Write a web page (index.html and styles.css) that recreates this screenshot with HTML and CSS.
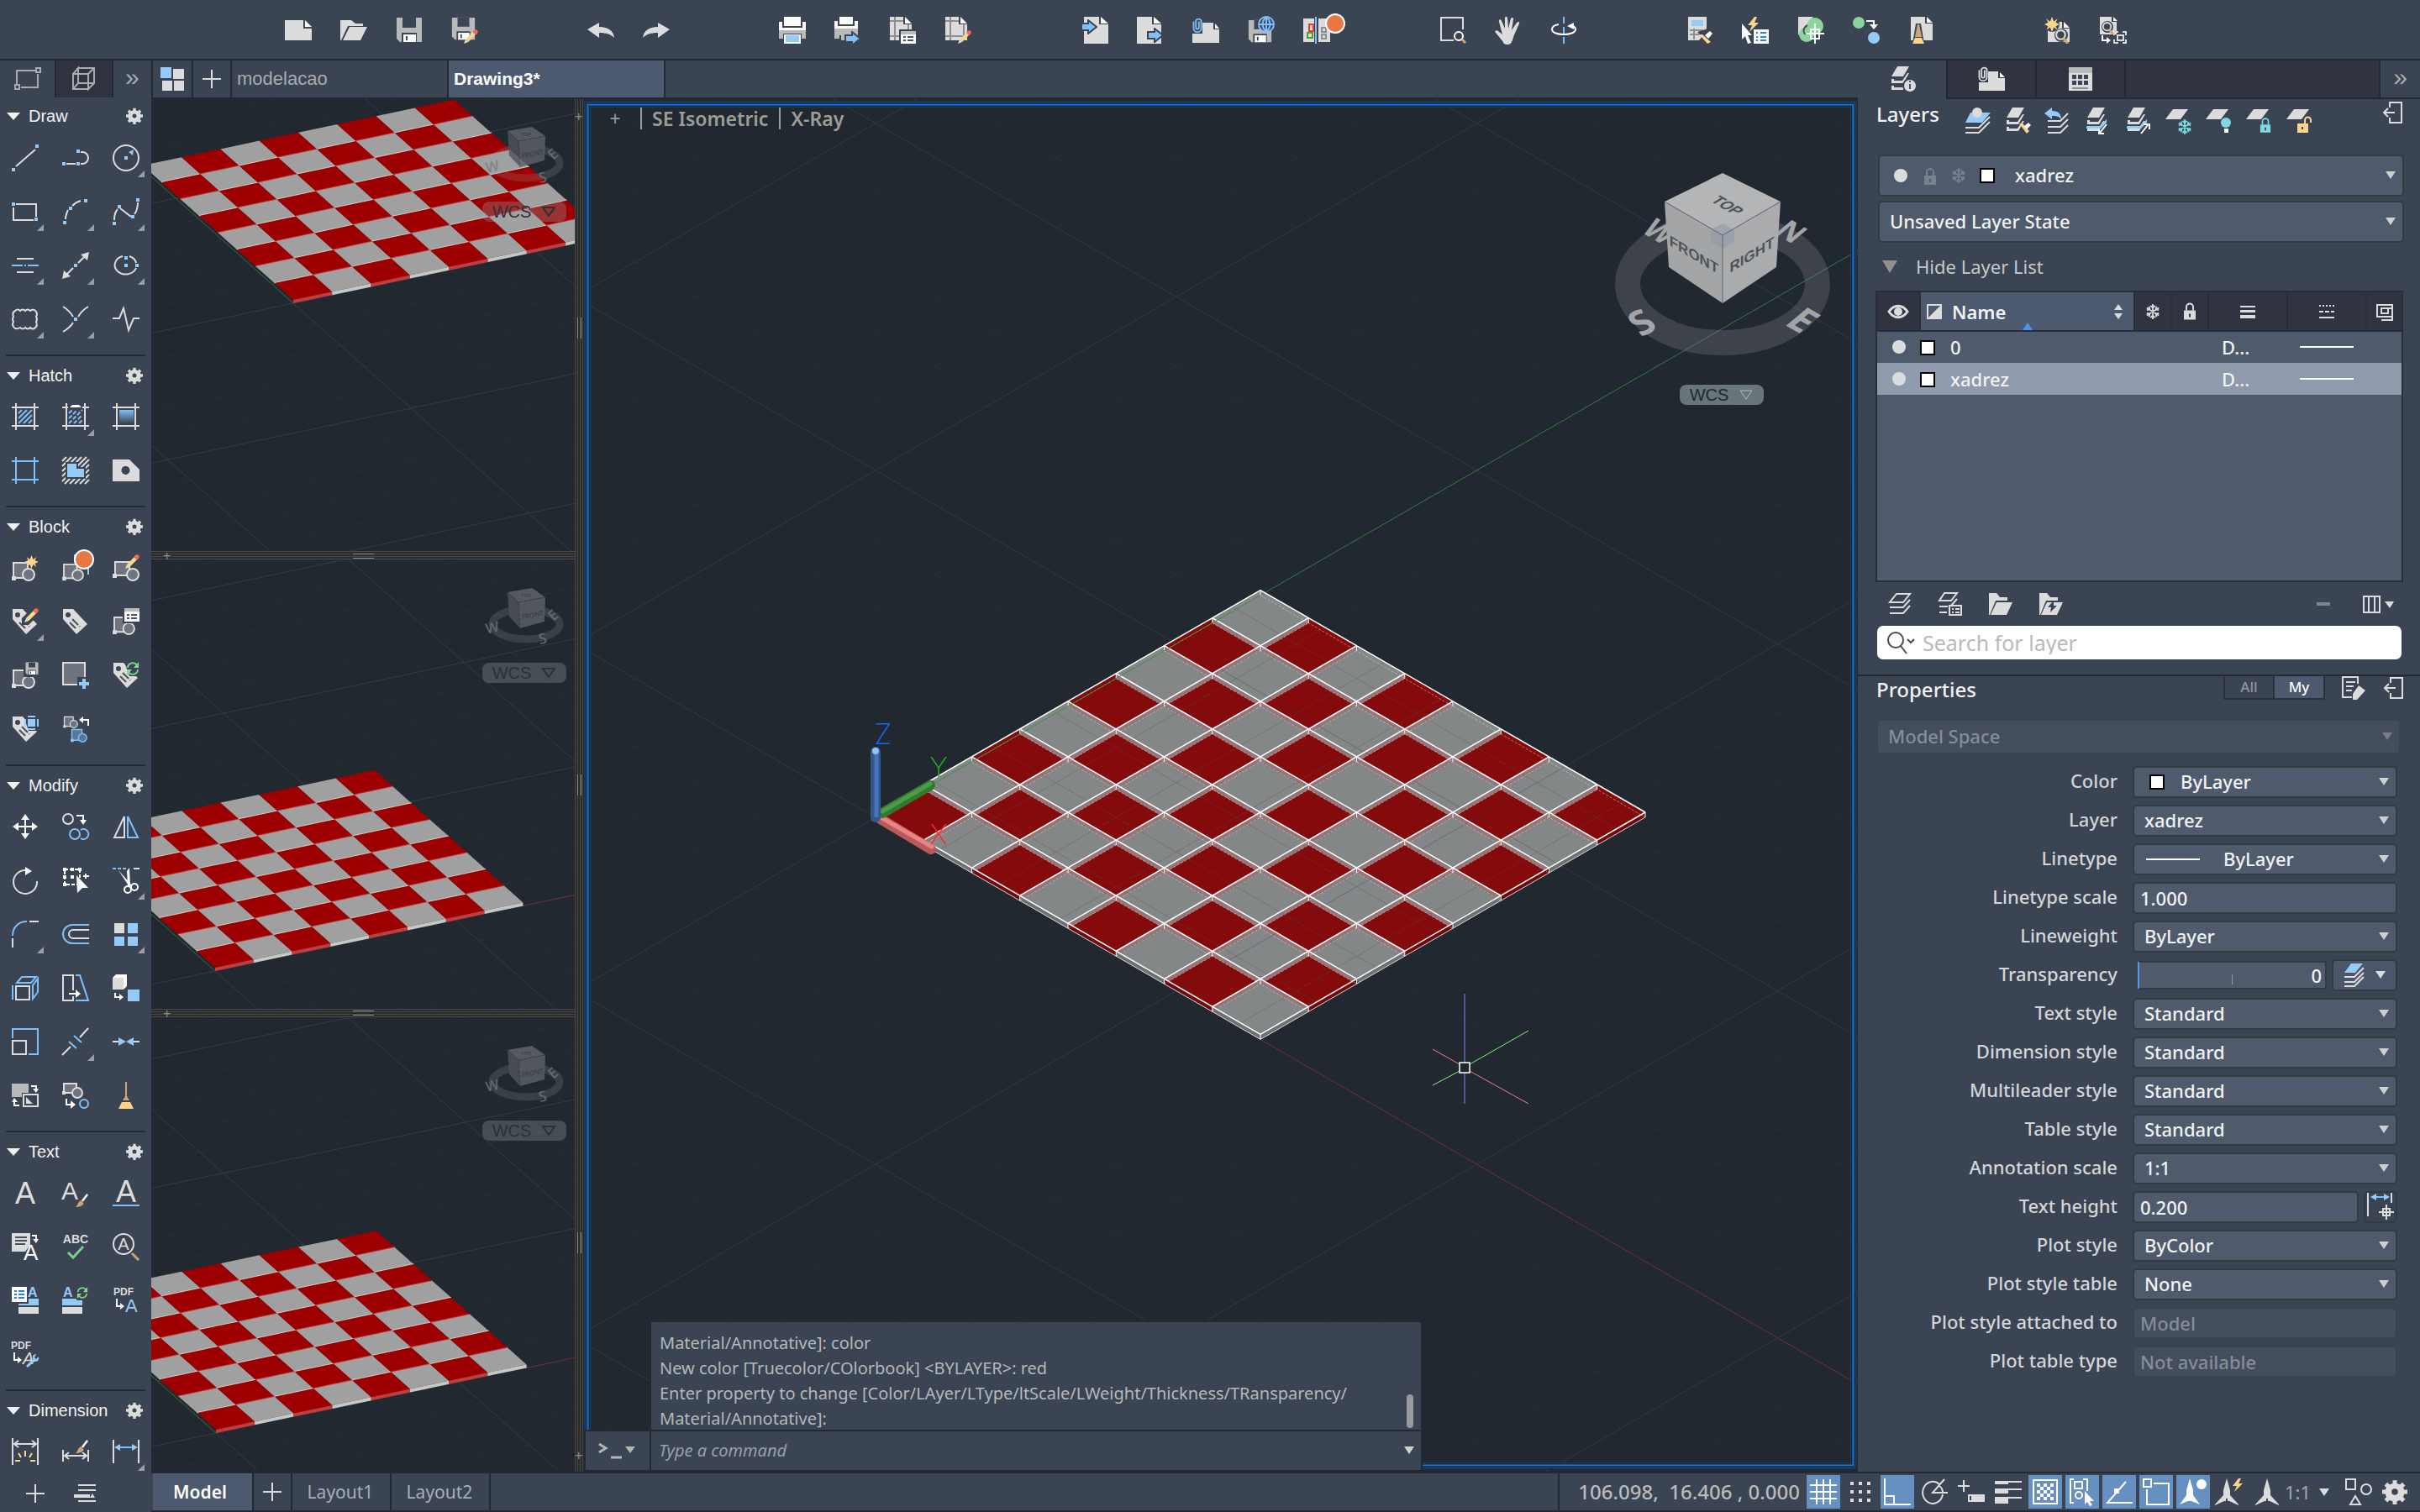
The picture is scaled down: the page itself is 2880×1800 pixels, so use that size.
FILE: index.html
```html
<!DOCTYPE html>
<html lang="en">
<head>
    <meta charset="UTF-8">
    <title>Drawing3</title>
    <link rel="stylesheet" href="styles.css">
</head>
<body>

<!-- shared icon parts -->
<svg class="sprite" aria-hidden="true">
    <symbol id="gear" viewBox="0 0 24 24">
        <path class="g" fill-rule="evenodd" d="M10 1h4v3l3 1 2-2 3 3-2 2 1 2h3v4h-3l-1 3 2 2-3 3-2-2-3 1v3h-4v-3l-3-1-2 2-3-3 2-2-1-3H0v-4h3l1-2-2-2 3-3 2 2 3-1zM12 9a3 3 0 1 0 0 6a3 3 0 1 0 0-6z"/>
    </symbol>
    <symbol id="page" viewBox="0 0 32 32"><path class="g" d="M3 0h18v9h11v23H3z"/><path class="w" d="M23 0v8h9z"/></symbol>
    <symbol id="sheet" viewBox="0 0 32 32"><path class="g" d="M0 0h16v9h10v19H0z"/><path class="w" d="M18 0v8h8z"/><path class="ms" d="M0 5h16M6 0v28M0 23h24M22 9v19"/></symbol>
    <symbol id="pencil" viewBox="0 0 16 16"><path class="r" d="M11 1l3-1 2 2-1 3-2 1-3-3z"/><path class="y" d="M10 3l3 3-8 8-3-3z"/><path class="g" d="M2 11l3 3-5 2z"/></symbol>
    <symbol id="floppy" viewBox="0 0 32 32"><path class="m" d="M1 1h30v29H5l-4-4z"/><path class="w" d="M8 1h16v10H8z"/><path class="k" d="M6 1h2v12h16V1h2M7 19h18v11H7z"/><path class="m" d="M6 1h2v10H6zM24 1h2v10h-2z"/><path class="w" d="M9 21h15v9H9z"/><path class="k" d="M12 23h2v5h-2z"/></symbol>
    <symbol id="arrow" viewBox="0 0 20 18"><path class="bd" d="M1 5h8V1l10 8-10 8v-4H1z"/></symbol>
    <symbol id="block" viewBox="0 0 28 24"><path class="fs" d="M2 2h17v18H2z"/><path class="g" d="M0 18h5v5H0z"/><circle class="fs" cx="20" cy="16" r="7"/></symbol>
    <symbol id="bblock" viewBox="0 0 28 24"><path class="bfs" d="M2 2h17v18H2z"/><path class="b" d="M0 18h5v5H0z"/><circle class="bfs" cx="20" cy="16" r="7"/></symbol>
    <symbol id="tag" viewBox="0 0 32 32"><path class="g" d="M1 1h12l17 18-13 12L1 13z"/><circle class="k" cx="7" cy="8" r="3"/><path class="ks" d="M12 13l9 9M9 17l8 8" stroke-dasharray="10 2 3"/></symbol>
    <symbol id="spark" viewBox="0 0 16 16"><path class="y" d="M8 0l2 5 4-3-2 4 4 2-4 2 2 4-4-3-2 5-2-5-4 3 2-4-4-2 4-2-2-4 4 3z"/></symbol>
    <symbol id="sync" viewBox="0 0 16 16"><path class="ns" d="M2 7a6 6 0 0 1 11-3M14 9a6 6 0 0 1-11 3"/><path class="n" d="M15 0v7H9zM1 16V9h6z"/></symbol>
    <symbol id="brush" viewBox="0 0 18 18"><path class="w" d="M9 9l7-9 2 2-7 9z"/><path class="o" d="M8 9l4 4c-2 4-6 5-11 5 3-2 3-7 7-9z"/></symbol>
    <symbol id="lens" viewBox="0 0 16 16"><circle class="gs" cx="7" cy="6" r="5"/><path class="os" d="M10 10l5 6"/></symbol>
    <symbol id="stack" viewBox="0 0 32 32"><path class="g" d="M10 0h14l-7 12H3zM3 15l3 0 0 2h10l6-9h2l-7 12H3zM3 23h3v2h10l6-9h2l-7 12H3z"/></symbol>
    <symbol id="plane" viewBox="0 0 32 32"><path class="g" d="M9 2h18L18 14H0z"/></symbol>
    <symbol id="flake" viewBox="0 0 20 20"><path d="M10 0v20M2 5l16 10M18 5L2 15M7 2l3 3 3-3M7 18l3-3 3 3M2 8l4-1-1-4M18 8l-4-1 1-4M2 12l4 1-1 4M18 12l-4 1 1 4" stroke="currentColor" stroke-width="2"/></symbol>
    <symbol id="lock" viewBox="0 0 16 20"><path d="M4 9V5a4 4 0 0 1 8 0v4" stroke="currentColor" stroke-width="2"/><path fill="currentColor" fill-rule="evenodd" d="M1 9h14v11H1zM7 13v4h2v-4z"/></symbol>
    <symbol id="clip" viewBox="0 0 12 22"><path d="M8 6v8a2 2 0 0 1-4 0V5a4 4 0 0 1 7 0v10a5 5 0 0 1-10 0V6" stroke="currentColor" stroke-width="2"/></symbol>
    <symbol id="needle" viewBox="0 0 32 32"><path class="g" d="M16 0l4 14v6l10 11v1l-11-5h-2v-3h-2v3h-2L2 32v-1l10-11v-6z"/></symbol>
    <symbol id="dock" viewBox="0 0 24 28"><path class="gs" d="M8 8V2h14v24H8v-6M14 14H2M6 9l-5 5 5 5"/></symbol>
    <symbol id="folder" viewBox="0 0 28 26"><path class="g" d="M0 0h9l4 5h9v4H8L1 26H0z"/><path class="g" d="M9 11h19l-7 15H2z"/></symbol>
    <symbol id="cube" viewBox="0 0 264 220">
        <ellipse cx="130" cy="132" rx="113" ry="70" stroke="#80858a" stroke-opacity=".3" stroke-width="30"/>
        <text class="compass" transform="translate(46 78) rotate(30) skewX(-20)">W</text>
        <text class="compass" transform="translate(202 78) rotate(30) skewX(-20)">N</text>
        <text class="compass big-letter" transform="translate(44 190) rotate(-28) skewX(12)">S</text>
        <text class="compass big-letter" transform="translate(213 186) rotate(30) skewX(-20)">E</text>
        <path d="M130 0l69 34-69 40-69-40z" fill="#b4b5b7"/>
        <path d="M61 34l69 40v81l-64-43z" fill="#a3a5a7"/>
        <path d="M199 34l-69 40v81l64-43z" fill="#a9abad"/>
        <path d="M130 60l14 8v14l-14 8-14-8V68z" fill="#8f9aa6" opacity=".6"/>
        <path d="M61 34l69 40 69-40M130 74v81" stroke="#63676b" stroke-width="1"/>
        <text class="face" transform="translate(130 42) rotate(30) skewX(-30)">TOP</text>
        <text class="face" transform="translate(96 103) skewY(31)">FRONT</text>
        <text class="face" transform="translate(165 103) skewY(-31)">RIGHT</text>
    </symbol>
    <symbol id="minicube" viewBox="0 0 100 72">
        <ellipse cx="50" cy="44" rx="40" ry="18" stroke="#9a9ea4" stroke-opacity=".25" stroke-width="9"/>
        <g fill="#777b81" font-size="17" text-anchor="middle">
            <text transform="translate(11 54) rotate(-12)">W</text>
            <text transform="translate(71 67) rotate(-12)">S</text>
            <text transform="translate(86 38) rotate(-40)">E</text>
        </g>
        <path d="M28 6l29-5 16 11-32 6z" fill="#62676d"/>
        <path d="M28 6l13 12 2 31-13-14z" fill="#50555b"/>
        <path d="M41 18l32-6-1 29-29 8z" fill="#5e6369"/>
        <path d="M28 6l13 12 32-6M41 18l2 31" stroke="#3c4147" stroke-dasharray="4 2"/>
        <text x="58" y="36" fill="#3c4147" font-size="8" text-anchor="middle" transform="rotate(-10 58 34)">FRONT</text>
        <text x="50" y="12" fill="#3c4147" font-size="6" text-anchor="middle">TOP</text>
    </symbol>
</svg>

<header class="toolbar">
    <div class="group">
        <button aria-label="New"><svg viewBox="0 0 32 32"><path class="g" d="M0 4h22v10h10v14H0z"/><path class="w" d="M24 4v8h8z"/></svg></button>
        <button aria-label="Open"><svg viewBox="0 0 32 32"><path class="g" d="M0 4h13l5 4h9v3H9L1 28H0z"/><path class="g" d="M11 12h21l-8 16H3z"/></svg></button>
        <button aria-label="Save"><svg viewBox="0 0 32 32"><use href="#floppy"/></svg></button>
        <button aria-label="Save as"><svg viewBox="0 0 32 32"><use href="#floppy" width="29" height="29"/><use href="#pencil" x="15" y="15" width="17" height="17"/></svg></button>
    </div>
    <div class="group">
        <button aria-label="Undo"><svg viewBox="0 0 32 32"><path class="g" d="M0 15L14 7v5c11 0 17 5 18 13-4-4-9-6-18-6v6z"/></svg></button>
        <button aria-label="Redo"><svg viewBox="0 0 32 32"><path class="g" d="M32 15L18 7v5C7 12 1 17 0 25c4-4 9-6 18-6v6z"/></svg></button>
    </div>
    <div class="group">
        <button aria-label="Plot"><svg viewBox="0 0 32 32"><path class="w" d="M6 0h20v11H6zM0 6h4v7h24V6h4v10H0z"/><path class="m" d="M0 16h32v10h-5v-6H5v6H0z"/><path class="w" d="M6 21h20v11H6z"/><path class="b" d="M8 22h16v8H8z"/></svg></button>
        <button aria-label="Batch plot"><svg viewBox="0 0 32 32"><path class="w" d="M6 0h16v9H6zM0 5h4v6h20V5h4v9H0z"/><path class="m" d="M0 14h28v8H6v4H0zM8 20h6v8H8z"/><use href="#arrow" x="12" y="17" width="20" height="18"/></svg></button>
        <button aria-label="Page setup"><svg viewBox="0 0 32 32"><use href="#sheet"/><path class="k" d="M11 15h21v17H11z"/><path class="w" d="M13 17h18v15H13z"/><path class="m" d="M13 17h18v4H13z"/><path class="ks" d="M16 24h3M21 24h7M16 28h3M21 28h7"/></svg></button>
        <button aria-label="Edit page setup"><svg viewBox="0 0 32 32"><use href="#sheet"/><use href="#pencil" x="15" y="16" width="16" height="16"/></svg></button>
    </div>
    <div class="group">
        <button aria-label="Import"><svg viewBox="0 0 32 32"><use href="#page"/><use href="#arrow" x="-1" y="3" width="20" height="18"/></svg></button>
        <button aria-label="Export"><svg viewBox="0 0 32 32"><use href="#page" x="-3"/><use href="#arrow" x="12" y="13" width="20" height="18"/></svg></button>
        <button aria-label="Attach"><svg viewBox="0 0 32 32"><path class="g" d="M0 20h12V7h13v8h7v16H0z"/><path class="w" d="M27 8v6h5z"/><use href="#clip" class="cb" width="12" height="20"/></svg></button>
        <button aria-label="Publish"><svg viewBox="0 0 32 32"><use href="#floppy" y="3" width="29" height="29"/><circle cx="22" cy="9" r="9" fill="#3b4453" class="bs"/><path class="bs" d="M13 9h18M22 0v18M22 0c-6 6-6 12 0 18M22 0c6 6 6 12 0 18"/></svg></button>
        <button class="badged" aria-label="Compare"><svg viewBox="0 0 32 32"><path class="g" d="M0 2h13v28H0zM18 2h14v28H18z"/><path class="bs" d="M15 0v32"/><path d="M7 9h5v8H7z" stroke="#f0392b" stroke-width="2"/><path d="M5 19h6v6H5z" stroke="#4aa02c" stroke-width="2"/><path class="ms" d="M22 13h5v5h-5zM22 21h5v5h-5z"/></svg></button>
    </div>
    <div class="group">
        <button aria-label="Zoom"><svg viewBox="0 0 32 32"><path class="gs" d="M17 28H2V1h26v14"/><circle class="ws" cx="23" cy="23" r="5"/><path class="os" d="M27 27l4 4"/></svg></button>
        <button aria-label="Pan"><svg viewBox="0 0 32 32"><path class="g" d="M10 30L1 19c-2-2 1-4 3-2l5 4L5 6c-1-3 2-4 3-1l4 9V2c0-3 3-3 3 0l1 12 3-12c1-2 4-1 3 1l-2 13 6-9c2-2 4-1 3 1l-7 16c-1 5-3 9-6 9h-2c-2 0-3-1-4-2z"/></svg></button>
        <button aria-label="Orbit"><svg viewBox="0 0 32 32"><path class="bs" d="M16 0v8M16 12v10M16 24v8"/><path class="ws" d="M10 9c-6 1-8 4-8 6 0 8 28 8 28 0 0-2-2-4-6-5"/><path class="w" d="M20 11l8-4v8z"/></svg></button>
    </div>
    <div class="group">
        <button aria-label="Match"><svg viewBox="0 0 32 32"><path class="g" d="M2 0h22v17l-9 11H2z"/><path class="b" d="M6 4h14v7H6z"/><path class="ms" d="M4 16h16M4 21h13M9 14v13"/><path class="k" d="M13 18l7-2 9-4 3 20h-6z"/><path class="y" d="M15 21l4 0 10 9-4 2z"/><path class="w" d="M22 22l6-5 3 3-5 6z"/></svg></button>
        <button aria-label="Quick select"><svg viewBox="0 0 32 32"><path class="y" d="M15 0L7 10h5L9 18l11-11h-5l3-7z"/><path class="w" d="M0 8l12 14H7l4 9-4 1-3-9-4 4zM14 15h18v17H14z"/><path d="M17 19h2M22 19h7M17 24h2M22 24h7M17 28h2M22 28h7" stroke="#2f80d8" stroke-width="2"/></svg></button>
        <button aria-label="Group"><svg viewBox="0 0 32 32"><path class="g" d="M1 0h18L1 22z"/><circle class="n" cx="21" cy="11" r="10"/><circle class="n" cx="11" cy="21" r="9"/><path class="ks" d="M12 10c-4 2-6 6-3 11"/><path class="ws" d="M21 8v24M11 20h21M16 15h10v11H16z"/></svg></button>
        <button aria-label="Purge"><svg viewBox="0 0 32 32"><circle class="n" cx="7" cy="7" r="7"/><circle class="b" cx="25" cy="25" r="7"/><path class="ws" d="M16 5h9v8"/><path class="w" d="M20 9h10l-5 6z"/></svg></button>
        <button aria-label="Clean"><svg viewBox="0 0 32 32"><path class="g" d="M3 0h17v8h9v20H3z"/><path class="w" d="M22 0v7h7z"/><path class="k" d="M9 8h6l4 24H5z"/><path class="o" d="M11 9h2l3 15H8z"/><path class="y" d="M8 25h8l3 7H5z"/></svg></button>
    </div>
    <div class="group">
        <button aria-label="New view"><svg viewBox="0 0 32 32"><path class="g" d="M4 6h17v8h9v16H4z"/><path class="w" d="M23 6v7h7z"/><circle class="k" cx="9" cy="9" r="9"/><use href="#spark" width="18" height="18"/><circle class="k" cx="20" cy="22" r="8"/><use href="#lens" x="12" y="15" width="17" height="17"/></svg></button>
        <button aria-label="Views"><svg viewBox="0 0 32 32"><path class="g" d="M0 0h14v6h6v15H0z"/><path class="w" d="M16 0v5h5z"/><circle class="k" cx="9" cy="12" r="7"/><use href="#lens" x="2" y="6" width="15" height="15"/><path class="ws" d="M3 22v6h7"/><path class="w" d="M8 24l5 4-5 4z"/><path class="gs" d="M17 22v-4h5M27 18h4v4M31 27v4h-4M22 31h-5v-4M21 22h7v6h-7z"/></svg></button>
    </div>
</header>

<div class="main">
    <aside class="tools">
        <div class="tool-tabs">
            <button class="on" aria-label="Drafting"><svg viewBox="0 0 32 28"><path class="ds" d="M3 20V4h22M28 8v16H8"/><path class="ds" d="M1 21h5v5H1zM26 1h5v5h-5z"/></svg></button>
            <button aria-label="Modeling"><svg viewBox="0 0 32 28"><path class="ds" d="M3 8h18v18H3zM9 1h19v18l-7 7V8l7-7M3 8l6-7v18l-6 7M9 19h19"/></svg></button>
            <button class="more" aria-label="More">»</button>
        </div>
        <div class="sets">
            <section>
                <h2>Draw<svg viewBox="0 0 24 24"><use href="#gear"/></svg></h2>
                <div class="grid">
                    <button aria-label="Line"><svg viewBox="0 0 32 32"><path class="gs" d="M5 26L28 6"/><path class="b" d="M0 28h4v4H0zM28 0h4v4h-4z"/></svg></button>
                    <button aria-label="Polyline"><svg viewBox="0 0 32 32"><path class="gs" d="M5 23h11M22 9h2a7 7 0 0 1 0 14h-2"/><path class="b" d="M0 21h4v4H0zM17 21h4v4h-4zM17 6h4v4h-4z"/></svg></button>
                    <button class="fly" aria-label="Circle"><svg viewBox="0 0 32 32"><circle class="gs" cx="16" cy="16" r="15"/><path class="b" d="M14 14h4v4h-4zM25 6l-1 7-5-4z"/></svg></button>
                    <button class="fly" aria-label="Rectangle"><svg viewBox="0 0 32 32"><path class="gs" d="M5 7h24v15M26 26H2V11"/><path class="b" d="M0 5h4v4H0zM27 23h4v4h-4z"/></svg></button>
                    <button class="fly" aria-label="Arc"><svg viewBox="0 0 32 32"><path class="gs" d="M4 25c0-5 1-7 3-11M12 9c3-3 6-5 10-6"/><path class="b" d="M1 27h4v4H1zM8 10h4v4H8zM26 1h4v4h-4z"/></svg></button>
                    <button class="fly" aria-label="Spline"><svg viewBox="0 0 32 32"><path class="gs" d="M2 26c0-6 1-10 4-13M9 12l13 10M26 19c3-4 4-8 4-14"/><path class="b" d="M0 28h4v4H0zM6 8h4v4H6zM22 20h4v4h-4zM28 0h4v4h-4z"/></svg></button>
                    <button class="fly" aria-label="Construction line"><svg viewBox="0 0 32 32"><path class="gs" d="M6 8h20M6 24h20"/><path class="bs" d="M0 16h32" stroke-dasharray="13 2 2 2"/></svg></button>
                    <button class="fly" aria-label="Ray"><svg viewBox="0 0 32 32"><path class="gs" d="M5 27l8-8M19 13l8-8"/><path class="g" d="M0 32l2-10 8 7zM32 0l-2 10-8-7z"/><path class="b" d="M14 14h4v4h-4z"/></svg></button>
                    <button class="fly" aria-label="Ellipse"><svg viewBox="0 0 32 32"><path class="gs" d="M20 5a13 11 0 0 1 8 8M28 19a13 11 0 1 1-16-14"/><path class="b" d="M14 14h4v4h-4zM14 5h4v4h-4zM27 14h4v4h-4z"/></svg></button>
                    <button class="fly" aria-label="Revision cloud"><svg viewBox="0 0 32 32"><path class="gs" d="M4 6q3-3 6 0q3-3 6 0q3-3 6 0q4-3 7 1q2 3 0 6q2 3 0 6q2 5-1 7q-3 3-6 0q-3 3-6 0q-3 3-6 0q-5 3-8-1q-2-3 0-6q-2-3 0-6q-2-5 2-7z"/></svg></button>
                    <button class="fly" aria-label="Points"><svg viewBox="0 0 32 32"><path class="gs" d="M1 1c5 3 9 7 12 12M31 1c-5 3-9 7-12 12M1 31c5-3 9-6 12-11"/><path class="b" d="M14 14h4v4h-4z"/></svg></button>
                    <button aria-label="Break line"><svg viewBox="0 0 32 32"><path class="gs" d="M0 15h8l5-12 6 26 6-14h7"/></svg></button>
                </div>
            </section>
            <section>
                <h2>Hatch<svg viewBox="0 0 24 24"><use href="#gear"/></svg></h2>
                <div class="grid">
                    <button aria-label="Hatch"><svg viewBox="0 0 32 32"><path class="gs" d="M0 5h32M0 27h32M5 0v32M27 0v32"/><path class="bs" d="M8 12l4-4M8 18L18 8M8 24L24 8M14 24l10-10M20 24l4-4"/></svg></button>
                    <button class="fly" aria-label="Hatch edit"><svg viewBox="0 0 32 32"><path class="gs" d="M0 5h7M24 5h8M0 27h32M5 0v32M27 0v32"/><path class="w" d="M9 5l3-3h8l3 3z"/><path class="bs" d="M8 12l4-4M8 18L18 8M8 24L24 8M14 24l10-10M20 24l4-4" stroke-dasharray="5 2"/></svg></button>
                    <button aria-label="Gradient"><svg viewBox="0 0 32 32"><defs><linearGradient id="fade" x2="0" y2="1"><stop stop-color="#7fc0fb"/><stop offset="1" stop-color="#3b4453"/></linearGradient></defs><path d="M8 8h17v16H8z" fill="url(#fade)"/><path class="gs" d="M0 5h32M0 27h32M5 0v32M27 0v32"/></svg></button>
                    <button aria-label="Boundary"><svg viewBox="0 0 32 32"><path class="bs" d="M0 5h32M0 27h32M5 0v32M27 0v32"/></svg></button>
                    <button aria-label="Region"><svg viewBox="0 0 32 32"><path class="gs" d="M0 5l5-5M0 11L11 0M0 17L17 0M0 23L23 0M0 29L29 0M3 32L32 3M9 32L32 9M15 32l17-17M21 32l11-11M27 32l5-5"/><path class="k" d="M4 6h15v6h9v14H4z"/><path class="b" d="M6 8h11v6h9v10H6z"/></svg></button>
                    <button aria-label="Wipeout"><svg viewBox="0 0 32 32"><path class="g" fill-rule="evenodd" d="M0 3h20l12 12v14H0zM15 11a5 5 0 1 0 1 0z"/></svg></button>
                </div>
            </section>
            <section>
                <h2>Block<svg viewBox="0 0 24 24"><use href="#gear"/></svg></h2>
                <div class="grid">
                    <button aria-label="Create block"><svg viewBox="0 0 32 32"><use href="#block" y="8" width="28" height="24"/><use href="#spark" x="15" y="1" width="17" height="16"/></svg></button>
                    <button class="badged" aria-label="Insert block"><svg viewBox="0 0 32 32"><path class="b" d="M14 0h18v24H14z"/><path class="k" d="M0 10h24v5h6v9H0z"/><use href="#block" y="10" width="26" height="22"/></svg></button>
                    <button aria-label="Edit block"><svg viewBox="0 0 32 32"><path class="fs" d="M3 9h17v16H3z"/><path class="g" d="M0 23h5v5H0z"/><circle class="fs" cx="24" cy="24" r="7"/><use href="#pencil" x="15" width="17" height="17"/></svg></button>
                    <button class="fly" aria-label="Edit attributes"><svg viewBox="0 0 32 32"><use href="#tag"/><path class="k" d="M12 12L24 0h8v8L20 20h-8z"/><use href="#pencil" x="15" width="17" height="17"/></svg></button>
                    <button aria-label="Attributes"><svg viewBox="0 0 32 32"><use href="#tag"/></svg></button>
                    <button aria-label="Block attributes"><svg viewBox="0 0 32 32"><use href="#block" y="9" width="27" height="23"/><path class="k" d="M12 0h20v18H12z"/><path class="w" d="M14 0h18v16H14z"/><path class="m" d="M14 0h18v4H14z"/><path class="ks" d="M17 8h3M22 8h7M17 12h3M22 12h7"/></svg></button>
                    <button aria-label="Write block"><svg viewBox="0 0 32 32"><use href="#block" y="8" width="28" height="24"/><path class="k" d="M14 0h18v18H14z"/><use href="#floppy" x="16" width="16" height="16"/></svg></button>
                    <button aria-label="Base point"><svg viewBox="0 0 32 32"><path class="fs" d="M1 1h26v26H1z"/><path class="k" d="M18 18h14v14H18z"/><path class="b" d="M24 20h4v4h4v4h-4v4h-4v-4h-4v-4h4z"/></svg></button>
                    <button aria-label="Sync attributes"><svg viewBox="0 0 32 32"><use href="#tag"/><path class="k" d="M14 0h18v17H20z"/><use href="#sync" x="16" width="16" height="16"/></svg></button>
                    <button aria-label="Extract attributes"><svg viewBox="0 0 32 32"><use href="#tag"/><path class="k" d="M14 0h18v18H20z"/><path class="b" d="M19 4h9v9h-9zM19 0h9v2h-9zM19 15h9v2h-9zM15 4h2v9h-2zM30 4h2v9h-2z"/></svg></button>
                    <button aria-label="Replace block"><svg viewBox="0 0 32 32"><use href="#block" width="20" height="15"/><use href="#bblock" x="8" y="15" width="24" height="17"/><path class="ws" d="M24 5h7v7"/><path class="w" d="M20 5l5-4v8z"/></svg></button>
                </div>
            </section>
            <section>
                <h2>Modify<svg viewBox="0 0 24 24"><use href="#gear"/></svg></h2>
                <div class="grid">
                    <button aria-label="Move"><svg viewBox="0 0 32 32"><path class="w" d="M16 1l5 7h-4v7h7v-4l7 5-7 5v-4h-7v7h4l-5 7-5-7h4v-7H8v4l-7-5 7-5v4h7V8h-4z"/></svg></button>
                    <button aria-label="Copy"><svg viewBox="0 0 32 32"><circle class="gs" cx="7" cy="7" r="6"/><circle class="bs" cx="15" cy="25" r="6"/><path class="bs" d="M22 20a6 6 0 1 1 0 10"/><path class="ws" d="M17 3h8v7"/><path class="w" d="M21 8h8l-4 6z"/></svg></button>
                    <button aria-label="Mirror"><svg viewBox="0 0 32 32"><path class="gs" d="M14 4v25H2z"/><path class="bs" d="M18 4v25h12z"/></svg></button>
                    <button aria-label="Rotate"><svg viewBox="0 0 32 32"><path class="gs" d="M17 4A14 14 0 1 0 30 17"/><path class="w" d="M16 0l8 5-8 5z"/></svg></button>
                    <button aria-label="Stretch"><svg viewBox="0 0 32 32"><path class="ws" d="M3 3h18v18H3z" stroke-dasharray="4 2"/><path class="w" d="M1 1h4v4H1zM10 1h4v4h-4zM19 1h4v4h-4zM1 10h4v4H1zM1 19h4v4H1zM10 10h4v4h-4zM25 10h7v2h-7zM27 8h2v6h-2z"/><path class="w" d="M17 10l14 15h-7l-6 6z"/></svg></button>
                    <button class="fly" aria-label="Trim"><svg viewBox="0 0 32 32"><path class="bs" d="M0 2h17" stroke-dasharray="4 2"/><path class="gs" d="M25 2h7"/><path class="w" d="M7 4l16 18-3 2zM20 1l1 20-3 1-1-17z"/><circle class="ws" cx="18" cy="27" r="4"/><circle class="ws" cx="26" cy="24" r="4"/></svg></button>
                    <button class="fly" aria-label="Fillet"><svg viewBox="0 0 32 32"><path class="bs" d="M1 18C1 8 8 1 18 1"/><path class="gs" d="M21 1h11M1 21v11"/></svg></button>
                    <button aria-label="Offset"><svg viewBox="0 0 32 32"><path class="bs" d="M32 5H12a11 11 0 0 0 0 22h20"/><path class="gs" d="M32 11H13a5 5 0 0 0 0 10h19"/></svg></button>
                    <button class="fly" aria-label="Array"><svg viewBox="0 0 32 32"><path class="g" d="M2 3h12v12H2z"/><path class="b" d="M18 3h12v12H18zM2 19h12v11H2zM18 19h12v11H18z"/></svg></button>
                    <button aria-label="Offset faces"><svg viewBox="0 0 32 32"><path class="gs" d="M5 14h16v16H5z"/><path class="bs" d="M6 10l6-7h17l-6 7zM25 13l6-8v16l-6 8zM1 13v17"/></svg></button>
                    <button aria-label="Taper"><svg viewBox="0 0 32 32"><path class="gs" d="M13 19V1H1v30h12v-5"/><path class="bs" d="M16 1h5l10 30H16"/><path class="ws" d="M8 23h10"/><path class="w" d="M16 18l6 5-6 5z"/></svg></button>
                    <button aria-label="Flatten"><svg viewBox="0 0 32 32"><path class="w" d="M0 4l4-4h13v14l-4 4z"/><path class="g" d="M0 4h13v14H0z"/><path class="b" d="M18 18h14v14H18z"/><path class="ws" d="M3 22v5h5"/><path class="w" d="M8 23l5 4-5 4z"/></svg></button>
                    <button aria-label="Scale"><svg viewBox="0 0 32 32"><path class="bs" d="M1 12V1h30v30H20"/><path class="gs" d="M1 15h16v16H1z"/></svg></button>
                    <button class="fly" aria-label="Break"><svg viewBox="0 0 32 32"><path class="gs" d="M0 32l10-10M21 11L31 0"/><path class="bs" d="M8 16l9 8M14 9l9 8"/></svg></button>
                    <button aria-label="Join"><svg viewBox="0 0 32 32"><path class="gs" d="M0 16h8M24 16h8"/><path class="b" d="M7 11l9 5-9 5zM25 11l-9 5 9 5z"/></svg></button>
                    <button aria-label="Draw order"><svg viewBox="0 0 32 32"><path class="m" d="M0 2h20v11h-8v5H0z"/><path class="gs" d="M14 15h17v14H14z"/><path class="g" d="M17 18l8 8h-8z"/><path class="ws" d="M23 5h6v5M9 28H3v-5"/><path class="w" d="M25 8h7l-3 5zM0 24h7l-4-5z"/></svg></button>
                    <button aria-label="Change space"><svg viewBox="0 0 32 32"><path class="fs" d="M2 2h15v11H2z"/><circle class="fs" cx="18" cy="13" r="6"/><path class="g" d="M0 11h4v4H0z"/><circle class="bs" cx="26" cy="26" r="5"/><path class="ws" d="M5 20v7h6"/><path class="w" d="M10 22l6 5-6 5z"/></svg></button>
                    <button aria-label="Purge"><svg viewBox="0 0 32 32"><path class="o" d="M15 0h2v17l3 5h-8l3-5z"/><path class="y" d="M11 24h10l4 8H7z"/></svg></button>
                </div>
            </section>
            <section>
                <h2>Text<svg viewBox="0 0 24 24"><use href="#gear"/></svg></h2>
                <div class="grid">
                    <button aria-label="Text"><svg viewBox="0 0 32 32"><text class="g mid" x="16" y="29" font-size="36">A</text></svg></button>
                    <button aria-label="Text style"><svg viewBox="0 0 32 32"><text class="g" x="-1" y="24" font-size="30">A</text><use href="#brush" x="14" y="17" width="18" height="16"/></svg></button>
                    <button aria-label="Underline"><svg viewBox="0 0 32 32"><text class="g mid" x="16" y="27" font-size="36">A</text><path class="bs" d="M0 31h32"/></svg></button>
                    <button aria-label="Convert text"><svg viewBox="0 0 32 32"><path class="g" d="M0 0h22v14l-6 8H0z"/><path class="ks" d="M4 5h14M4 9h14M4 13h12"/><text class="w" x="14" y="32" font-size="26">A</text><path class="ws" d="M24 3h5v6"/><path class="w" d="M25 7h7l-3 5z"/></svg></button>
                    <button aria-label="Spelling"><svg viewBox="0 0 32 32"><text class="g mid" x="16" y="12" font-size="14" font-weight="bold">ABC</text><path d="M7 23l6 6L25 16" stroke="#79d08a" stroke-width="3"/></svg></button>
                    <button aria-label="Find text"><svg viewBox="0 0 32 32"><circle class="gs" cx="13" cy="13" r="12"/><text class="g mid" x="13" y="20" font-size="20">A</text><path class="os" d="M23 24l8 8"/></svg></button>
                    <button aria-label="Text list"><svg viewBox="0 0 32 32"><path class="w" d="M0 0h18v18H0z"/><path d="M3 5h3M8 5h7M3 9h3M8 9h7M3 13h3M8 13h7" stroke="#2f80d8" stroke-width="2"/><text class="b" x="19" y="12" font-size="16" font-weight="bold">A</text><path class="b" d="M20 14h12v8H8v-2h12z"/><path class="g" d="M8 24h24v8H8z"/></svg></button>
                    <button aria-label="Update fields"><svg viewBox="0 0 32 32"><text class="b" x="1" y="12" font-size="16" font-weight="bold">A</text><use href="#sync" x="16" width="16" height="14"/><path class="b" d="M0 14h16l2 2h6v6H0z"/><path class="g" d="M0 24h24v8H0z"/></svg></button>
                    <button aria-label="PDF text"><svg viewBox="0 0 32 32"><text class="g" x="1" y="10" font-size="12" font-weight="bold">PDF</text><path class="ws" d="M5 14v9h5"/><path class="w" d="M9 19l5 4-5 4z"/><text class="b" x="15" y="30" font-size="22">A</text></svg></button>
                    <button aria-label="PDF text settings"><svg viewBox="0 0 32 32"><text class="g" x="-1" y="10" font-size="12" font-weight="bold">PDF</text><path class="ws" d="M3 14v9h5"/><path class="w" d="M7 19l5 4-5 4z"/><text class="g" x="13" y="28" font-size="20" font-style="italic">A</text><path class="b" d="M17 30l8-8c-1-4 1-6 4-6l-2 4 2 2 3-3c1 4-1 6-5 6l-8 7z"/></svg></button>
                </div>
            </section>
            <section>
                <h2>Dimension<svg viewBox="0 0 24 24"><use href="#gear"/></svg></h2>
                <div class="grid">
                    <button aria-label="Dimension"><svg viewBox="0 0 32 32"><path class="gs" d="M1 0v32M31 0v32M4 7h24M8 3L3 7l5 4M24 3l5 4-5 4"/><path class="ys" d="M16 15v7M8 18l3 5M24 18l-3 5M4 27h6M28 27h-6"/></svg></button>
                    <button aria-label="Dimension style"><svg viewBox="0 0 32 32"><path class="gs" d="M1 14v14M31 14v14M4 21h24M8 17l-5 4 5 4M24 17l5 4-5 4"/><use href="#brush" x="14" y="2" width="18" height="16"/></svg></button>
                    <button class="fly" aria-label="Linear"><svg viewBox="0 0 32 32"><path class="gs" d="M1 2v28M31 2v28"/><path class="bs" d="M4 11h24"/><path class="b" d="M9 7v8l-7-4zM23 7v8l7-4z"/></svg></button>
                </div>
            </section>
        </div>
        <div class="tool-foot">
            <button aria-label="Add"><svg viewBox="0 0 22 22"><path class="gs" d="M11 0v22M0 11h22"/></svg></button>
            <button aria-label="Customize"><svg viewBox="0 0 26 22"><path class="gs" d="M5 1h21M5 7h21M5 20h21"/><path class="g" d="M0 12h19v4H0zM22 11l3 5h-6z"/></svg></button>
        </div>
    </aside>

    <div class="work">
        <div class="desk">
            <div class="center">
                <nav class="doc-tabs">
                    <button class="square" aria-label="All tabs"><svg viewBox="0 0 28 28"><path class="b" d="M0 0h13v13H0z"/><path class="g" d="M15 2h13v12H15zM2 16h12v12H2zM16 16h12v12H16z"/></svg></button>
                    <button class="square" aria-label="New tab"><svg viewBox="0 0 22 22" class="plus"><path class="gs" d="M11 0v22M0 11h22"/></svg></button>
                    <a class="doc" href="#modelacao">modelacao</a>
                    <a class="doc on" href="#drawing3">Drawing3*</a>
                </nav>
                <div class="views">
                    <div class="side-views">
                        <div class="view"><svg class="canvas" id="view1"></svg><svg class="minicube" viewBox="0 0 100 72"><use href="#minicube"/></svg><button class="wcs">WCS <svg viewBox="0 0 18 12"><path d="M2 1h14l-7 10z"/></svg></button></div>
                        <div class="split"><i></i></div>
                        <div class="view"><svg class="canvas" id="view2"></svg><svg class="minicube" viewBox="0 0 100 72"><use href="#minicube"/></svg><button class="wcs">WCS <svg viewBox="0 0 18 12"><path d="M2 1h14l-7 10z"/></svg></button></div>
                        <div class="split"><i></i></div>
                        <div class="view"><svg class="canvas" id="view3"></svg><svg class="minicube" viewBox="0 0 100 72"><use href="#minicube"/></svg><button class="wcs">WCS <svg viewBox="0 0 18 12"><path d="M2 1h14l-7 10z"/></svg></button></div>
                    </div>
                    <div class="split upright"><i></i><i></i><i></i></div>
                    <div class="view current">
                        <svg class="canvas" id="view4"></svg>
                        <div class="view-label"><button class="first">+</button><button>SE Isometric</button><button>X-Ray</button></div>
                        <svg class="bigcube" viewBox="0 0 264 220"><use href="#cube"/></svg>
                        <button class="wcs">WCS <svg viewBox="0 0 18 12"><path d="M2 1h14l-7 10z"/></svg></button>
                        <div class="command">
                            <div class="history">
                                <p>Material/Annotative]: color<br>New color [Truecolor/COlorbook] &lt;BYLAYER&gt;: red<br>Enter property to change [Color/LAyer/LType/ltScale/LWeight/Thickness/TRansparency/<br>Material/Annotative]:</p>
                            </div>
                            <button class="prompt" aria-label="Recent commands"><svg viewBox="0 0 46 20"><path d="M1 2l8 5-8 5M15 18h13" stroke="#b4b4b4" stroke-width="3"/><path d="M32 5h12l-6 8z" fill="#b4b4b4"/></svg></button>
                            <div class="entry"><input type="text" placeholder="Type a command" aria-label="Command"></div>
                        </div>
                    </div>
                </div>
            </div>

            <aside class="palette">
                <div class="palette-tabs">
                    <button class="on" aria-label="Layers and properties"><svg viewBox="0 0 32 32"><use href="#stack"/><circle class="k" cx="25" cy="23" r="9"/><circle class="g" cx="25" cy="23" r="7"/><path class="ks" d="M25 21v6M25 17v2"/></svg></button>
                    <button aria-label="References"><svg viewBox="0 0 32 32"><path class="g" d="M1 20h11V7h12v8h8v15H1z"/><path class="w" d="M26 8v6h6z"/><use href="#clip" class="cg" width="12" height="20"/></svg></button>
                    <button aria-label="Content"><svg viewBox="0 0 32 32"><path class="g" d="M2 2h28v28H2z"/><path class="m" d="M2 2h28v7H2z"/><path class="k" d="M6 11h5v5H6zM13 11h5v5h-5zM20 11h5v5h-5zM6 18h5v5H6zM13 18h5v5h-5zM20 18h5v5h-5z"/><path class="ms" d="M6 27h19"/></svg></button>
                    <button class="more" aria-label="More">»</button>
                </div>

                <section class="layers">
                    <div class="title-row">
                        <h2>Layers</h2>
                        <div class="layer-tools">
                            <button aria-label="Match"><svg viewBox="0 0 32 32"><path class="b" d="M8 6h24L22 18H2z"/><circle class="g" cx="16" cy="6" r="6"/><path class="gs" d="M2 24h16L31 11M2 30h16l13-13"/></svg></button>
                            <button aria-label="Previous"><svg viewBox="0 0 32 32"><use href="#stack"/><path class="y" d="M18 19l4 0 8 9-3 3z"/><path class="w" d="M24 22l5-4 3 3-5 5z"/></svg></button>
                            <button aria-label="Restore"><svg viewBox="0 0 32 32"><path class="gs" d="M4 16h15l9-9M4 23h15l9-9M4 30h15l9-9"/><path class="b" d="M0 7l9-7v4c8 0 11 4 11 10-3-4-6-4-11-4v4z"/></svg></button>
                            <button aria-label="Isolate"><svg viewBox="0 0 32 32"><use href="#stack"/><path class="b" d="M2 22h16l8-8v4l-7 7H2z"/><path class="ws" d="M26 20l-8 10M17 25v6h6"/></svg></button>
                            <button aria-label="Unisolate"><svg viewBox="0 0 32 32"><use href="#stack"/><path class="b" d="M2 22h16l8-8v4l-7 7H2z"/><path class="ws" d="M19 31l8-10M22 20h7v6"/></svg></button>
                            <button aria-label="Freeze"><svg viewBox="0 0 32 32"><use href="#plane"/><use href="#flake" class="cc" x="14" y="14" width="18" height="18"/></svg></button>
                            <button aria-label="Off"><svg viewBox="0 0 32 32"><use href="#plane"/><circle cx="24" cy="18" r="6" fill="#7fd8e0"/><path class="w" d="M22 25h5v5h-5z"/></svg></button>
                            <button aria-label="Lock"><svg viewBox="0 0 32 32"><use href="#plane"/><use href="#lock" class="cc" x="16" y="12" width="14" height="18"/></svg></button>
                            <button aria-label="Unlock"><svg viewBox="0 0 32 32"><use href="#plane"/><path class="y" fill-rule="evenodd" d="M13 19h13v11H13zM18 23v3h2v-3z"/><path class="ys" d="M22 19v-4a3 3 0 0 1 7 0v3"/></svg></button>
                        </div>
                        <button class="dock" aria-label="Undock"><svg viewBox="0 0 24 28"><use href="#dock"/></svg></button>
                    </div>

                    <div class="combo big marks">
                        <span class="lead"><svg viewBox="0 0 120 36"><circle class="g" cx="18" cy="18" r="8"/><use href="#lock" class="cf" x="45" y="9" width="16" height="20"/><use href="#flake" class="cf" x="78" y="9" width="18" height="18"/></svg><b class="swatch"></b></span>
                        <select aria-label="Current layer"><option>xadrez</option><option>0</option></select>
                    </div>
                    <div class="combo big"><select aria-label="Layer state"><option>Unsaved Layer State</option></select></div>
                    <button class="fold">Hide Layer List</button>

                    <div class="layer-list">
                        <table>
                            <colgroup><col class="c-eye"><col><col class="c-flag"><col class="c-flag"><col class="c-line"><col class="c-line"><col class="c-last"></colgroup>
                            <thead>
                                <tr>
                                    <th><svg class="ic" viewBox="0 0 24 24"><path d="M1 12c6-9 16-9 22 0-6 9-16 9-22 0z" stroke="#dcdcdc" stroke-width="3"/><circle class="g" cx="12" cy="12" r="5"/></svg></th>
                                    <th class="name"><div><svg class="ic" viewBox="0 0 24 24"><path class="gs" d="M4 4h16v16H4z"/><path class="g" d="M4 20L20 4v16z"/></svg><span>Name</span><svg class="ic" viewBox="0 0 24 24"><path class="g" d="M12 3l5 7H7zM12 21l5-7H7z"/></svg></div></th>
                                    <th><svg class="ic cg" viewBox="0 0 24 24"><use href="#flake" x="3" y="3" width="18" height="18"/></svg></th>
                                    <th><svg class="ic cg" viewBox="0 0 24 24"><use href="#lock" x="4" y="1" width="16" height="21"/></svg></th>
                                    <th><svg class="ic" viewBox="0 0 24 24"><path class="g" d="M3 5h18v2H3zM3 10h18v3H3zM3 16h18v4H3z"/></svg></th>
                                    <th><svg class="ic" viewBox="0 0 24 24"><path class="gs" d="M3 5h18" stroke-dasharray="2 2"/><path class="gs" d="M3 12h18" stroke-dasharray="5 2"/><path class="gs" d="M3 19h18"/></svg></th>
                                    <th><svg class="ic" viewBox="0 0 24 24"><path class="gs" d="M3 4h18v14H3zM8 8h13v14H8M8 8h8v6H8z"/></svg></th>
                                </tr>
                            </thead>
                            <tbody>
                                <tr><td><i class="dot"></i></td><td><b class="swatch"></b>0</td><td></td><td></td><td>D...</td><td><i class="rule"></i></td><td></td></tr>
                                <tr class="picked"><td><i class="dot"></i></td><td><b class="swatch"></b>xadrez</td><td></td><td></td><td>D...</td><td><i class="rule"></i></td><td></td></tr>
                            </tbody>
                        </table>
                    </div>

                    <div class="list-tools">
                        <button aria-label="New layer"><svg viewBox="0 0 28 28"><path class="gs" d="M10 2h16l-8 10H2zM2 18h16l8-9M2 25h16l8-9"/></svg></button>
                        <button aria-label="Layer states"><svg viewBox="0 0 28 28"><path class="gs" d="M7 1h15l-7 9H1zM1 17h10M1 24h9M15 16l7-8"/><path class="gs" d="M13 16h14v11H13z"/><path class="gs" d="M16 20h2M20 20h5M16 24h2M20 24h5"/></svg></button>
                        <button aria-label="New group"><svg viewBox="0 0 28 28"><use href="#folder" y="1" width="28" height="26"/></svg></button>
                        <button aria-label="Dynamic group"><svg viewBox="0 0 28 28"><use href="#folder" y="1" width="28" height="26"/><path class="k" d="M17 10l-7 8h4l-1 6 8-8h-4z"/></svg></button>
                        <span class="push"></span>
                        <button aria-label="Delete"><svg viewBox="0 0 28 28"><path d="M6 12h16v4H6z" fill="#7d8490"/></svg></button>
                        <button class="cols" aria-label="Columns"><svg viewBox="0 0 38 28"><path class="gs" d="M2 5h19v19H2zM8 5v19M15 5v19"/><path class="g" d="M27 11h11l-5 8z"/></svg></button>
                    </div>
                    <div class="search">
                        <svg viewBox="0 0 34 30"><circle cx="11" cy="12" r="9" stroke="#4a4a4a" stroke-width="2"/><path d="M17 19l7 9M25 11l4 4 4-4" stroke="#4a4a4a" stroke-width="2"/></svg>
                        <input type="text" placeholder="Search for layer" aria-label="Search for layer">
                    </div>
                </section>

                <section class="props">
                    <div class="title-row">
                        <h2>Properties</h2>
                        <div class="switch"><button>All</button><button class="on">My</button></div>
                        <button class="note" aria-label="Customize"><svg viewBox="0 0 28 28"><path class="gs" d="M12 25H1V1h18v8M5 7h11M5 12h9M5 17h7"/><path class="g" d="M20 11l8 6-10 11h-5v-7z"/></svg></button>
                        <button class="dock" aria-label="Undock"><svg viewBox="0 0 24 28"><use href="#dock"/></svg></button>
                    </div>
                    <div class="combo space off"><select disabled aria-label="Space"><option>Model Space</option></select></div>

                    <div class="fields">
                        <label for="color">Color</label>
                        <div class="combo color"><span class="lead"><b class="swatch"></b></span><select id="color"><option>ByLayer</option></select></div>
                        <label for="layer">Layer</label>
                        <div class="combo"><select id="layer"><option>xadrez</option></select></div>
                        <label for="ltype">Linetype</label>
                        <div class="combo ltype"><span class="lead"><i class="rule"></i></span><select id="ltype"><option>ByLayer</option></select></div>
                        <label for="ltscale">Linetype scale</label>
                        <input class="box" id="ltscale" type="text" value="1.000">
                        <label for="lweight">Lineweight</label>
                        <div class="combo"><select id="lweight"><option>ByLayer</option></select></div>
                        <label for="transp">Transparency</label>
                        <div class="pair">
                            <span class="slide"><input id="transp" type="text" value="0"></span>
                            <button class="from" aria-label="Transparency source"><svg viewBox="0 0 54 30"><path class="b" d="M11 1h14l-9 11H3z"/><path class="gs" d="M3 17h12L26 6M3 23h12l11-11M3 28h12l11-11"/><path class="g" d="M40 10h12l-6 9z"/></svg></button>
                        </div>
                        <label for="tstyle">Text style</label>
                        <div class="combo"><select id="tstyle"><option>Standard</option></select></div>
                        <label for="dstyle">Dimension style</label>
                        <div class="combo"><select id="dstyle"><option>Standard</option></select></div>
                        <label for="mstyle">Multileader style</label>
                        <div class="combo"><select id="mstyle"><option>Standard</option></select></div>
                        <label for="tbstyle">Table style</label>
                        <div class="combo"><select id="tbstyle"><option>Standard</option></select></div>
                        <label for="ascale">Annotation scale</label>
                        <div class="combo"><select id="ascale"><option>1:1</option></select></div>
                        <label for="theight">Text height</label>
                        <div class="pair tight">
                            <input class="box" id="theight" type="text" value="0.200">
                            <button class="pick" aria-label="Pick height"><svg viewBox="0 0 36 34"><path class="gs" d="M3 0v28M31 0v12"/><path class="bs" d="M8 5h18"/><path class="b" d="M13 1v8L6 5zM22 1v8l7-4z"/><path class="gs" d="M25 14v18M16 23h18M21 19h8v8h-8z"/></svg></button>
                        </div>
                        <label for="pstyle">Plot style</label>
                        <div class="combo"><select id="pstyle"><option>ByColor</option></select></div>
                        <label for="ptable">Plot style table</label>
                        <div class="combo"><select id="ptable"><option>None</option></select></div>
                        <label for="pattach">Plot style attached to</label>
                        <input class="box" id="pattach" type="text" value="Model" disabled>
                        <label for="ptype">Plot table type</label>
                        <input class="box" id="ptype" type="text" value="Not available" disabled>
                    </div>
                </section>
            </aside>
        </div>

        <footer class="status">
            <a class="on" href="#model">Model</a>
            <button class="add" aria-label="New layout"><svg viewBox="0 0 22 22"><path class="gs" d="M11 0v22M0 11h22"/></svg></button>
            <a class="layout" href="#layout1">Layout1</a>
            <a class="layout" href="#layout2">Layout2</a>
            <span class="push"></span>
            <span class="coords">106.098,&nbsp; 16.406 , 0.000</span>
            <div class="modes">
                <button class="on" aria-label="Grid"><svg viewBox="0 0 32 32"><path class="ws" d="M8 1v30M16 1v30M24 1v30M0 8h32M0 16h32M0 24h32"/></svg></button>
                <button aria-label="Snap"><svg viewBox="0 0 32 32"><path class="g" d="M4 4h4v4H4zM14 4h4v4h-4zM24 4h4v4h-4zM4 14h4v4H4zM14 14h4v4h-4zM24 14h4v4h-4zM4 24h4v4H4zM14 24h4v4h-4zM24 24h4v4h-4z"/></svg></button>
                <button class="on" aria-label="Ortho"><svg viewBox="0 0 32 32"><path class="ws" d="M1 0v31h31M1 21h11v10"/></svg></button>
                <button aria-label="Polar"><svg viewBox="0 0 32 32"><path class="gs" d="M22 7a12 13 0 1 0 4 12M28 1L14 17h18M22 9c3 2 4 5 4 8"/></svg></button>
                <button aria-label="Dynamic input"><svg viewBox="0 0 32 32"><path class="gs" d="M7 2v14M0 9h14"/><path class="g" fill-rule="evenodd" d="M12 19h20v9H12zM14 21v5h2v-5z"/></svg></button>
                <button aria-label="Lineweight"><svg viewBox="0 0 32 32"><path class="g" d="M0 3h32v2H16v2H0zM0 12h32v2H16v4H0zM0 22h32v2H16v6H0z"/></svg></button>
                <button class="on" aria-label="Transparency"><svg viewBox="0 0 32 32"><path class="ws" d="M2 2h28v28H2z"/><path class="w" d="M6 6h4v4H6zM14 6h4v4h-4zM22 6h4v4h-4zM10 10h4v4h-4zM18 10h4v4h-4zM6 14h4v4H6zM14 14h4v4h-4zM22 14h4v4h-4zM10 18h4v4h-4zM18 18h4v4h-4zM6 22h4v4H6zM14 22h4v4h-4zM22 22h4v4h-4z"/></svg></button>
                <button class="on" aria-label="Selection cycling"><svg viewBox="0 0 32 32"><path class="ws" d="M6 1H2v28h4M17 1h5v14M7 4h9v8H7z"/><circle class="ws" cx="12" cy="20" r="4"/><path class="w" d="M19 15l11 12h-5l3 5-3 1-3-5-3 3z"/></svg></button>
                <button class="on" aria-label="Tracking"><svg viewBox="0 0 32 32"><path class="ws" d="M24 4L2 29h30"/><path class="w" d="M10 12h6v6h-6z"/></svg></button>
                <button class="on" aria-label="Object snap"><svg viewBox="0 0 32 32"><path class="ws" d="M1 1h9v9H1zM13 6h18v25H5V13"/></svg></button>
                <button class="on" aria-label="Annotation visibility"><svg viewBox="0 0 32 32"><path class="w" d="M12 0l4 14v6l8 11-10-4h-4L0 31l8-11v-6z"/><circle cx="26" cy="7" r="6" fill="#fff"/></svg></button>
                <button aria-label="Auto scale"><svg viewBox="0 0 32 32"><use href="#needle" x="-4"/><path class="y" d="M26 0l-7 9h5l-3 7 10-10h-5l3-6z"/></svg></button>
                <button aria-label="Annotation scale"><svg viewBox="0 0 32 32"><use href="#needle"/></svg></button>
            </div>
            <button class="scale">1:1</button>
            <button class="shapes" aria-label="Workspace"><svg viewBox="0 0 32 32"><path class="gs" d="M2 1h11v12H2zM13 21l6 10H7z"/><circle class="gs" cx="26" cy="13" r="6"/></svg></button>
            <button class="cog" aria-label="Settings"><svg viewBox="0 0 24 24"><use href="#gear"/></svg></button>
        </footer>
    </div>
</div>

<script src="views.js"></script>
</body>
</html>
```

FILE: styles.css
```css
*{ margin:0; padding:0; box-sizing:border-box;}
html, body{ height:100%;}
body{
    display: flex;
    flex-direction: column;
    background: #222933;
    color: #f2f2f2;
    font: 500 22px/28px "Noto Sans", sans-serif;
    overflow: hidden;
}
button{
    display: flex;
    align-items: center;
    justify-content: center;
    border: 0;
    background: none;
    color: inherit;
    font: inherit;
}
input, select{
    font: inherit;
    color: inherit;
    border: 0;
    outline: 0;
    background: none;
    min-width: 0;
}
select{ appearance:none;}
a{ color:inherit; text-decoration:none;}
h2{ font-weight:500;}
i, b{ display:block;}
svg{ display:block; fill:none; overflow:visible;}
.sprite{ position:absolute; width:0; height:0;}
.push{ flex:1;}

/* icon paint */
.g{ fill:#dcdcdc;}
.w{ fill:#fbfbfb;}
.m{ fill:#b9b9b9;}
.b{ fill:#96caf7;}
.y{ fill:#fbd58b;}
.o{ fill:#cfa474;}
.n{ fill:#8bd49b;}
.r{ fill:#ee6a60;}
.k{ fill:#3b4453;}
.gs{ stroke:#dcdcdc; stroke-width:2;}
.ws{ stroke:#fff; stroke-width:2;}
.ms{ stroke:#8e8e8e; stroke-width:2;}
.bs{ stroke:#7fc0fb; stroke-width:2;}
.ys{ stroke:#fbd58b; stroke-width:2;}
.os{ stroke:#cfa474; stroke-width:3;}
.ns{ stroke:#79d08a; stroke-width:2;}
.ks{ stroke:#4a505c; stroke-width:2;}
.ds{ stroke:#a9abae; stroke-width:2;}
.bd{ fill:#7fc0fb; stroke:#3b4453; stroke-width:2;}
.fs{ fill:#6f747f; stroke:#dcdcdc; stroke-width:2;}
.bfs{ fill:#5a7796; stroke:#7fc0fb; stroke-width:2;}
.cb{ color:#7fc0fb;}
.cg{ color:#dcdcdc;}
.cc{ color:#7fd8e0;}
.cf{ color:#78818f;}
.mid{ text-anchor:middle;}
.tools text{ font-family:"Liberation Sans", sans-serif;}

/* top toolbar */
.toolbar{
    display: flex;
    justify-content: center;
    gap: 130px;
    height: 72px;
    padding: 20px 10px 0 0;
    background: #3b4453;
    border-bottom: 2px solid #222933;
}
.group{ display:flex; gap:34px; height:32px;}
.group svg{ width:32px; height:32px;}
.badged{ position:relative;}
.badged::after{
    content: "";
    position: absolute;
    right: -18px;
    top: -4px;
    width: 20px;
    height: 20px;
    border: 2px solid #fff;
    border-radius: 50%;
    background: #e87742;
}

.main{ display:flex; flex:1; min-height:0;}

/* left tool sets */
.tools{
    display: flex;
    flex-direction: column;
    width: 180px;
    background: #3b4453;
    font-family: "Liberation Sans", sans-serif;
}
.tool-tabs{ display:flex; height:44px; background:#222933; gap:2px;}
.tool-tabs button{ width:66px; background:#2f3440;}
.tool-tabs svg{ width:32px; height:28px;}
.tool-tabs .on, .tool-tabs .more{ background:#3b4453;}
.tool-tabs .more{ width:46px;}
.more{ color:#a9abae; font:30px/30px "Liberation Sans", sans-serif; padding-bottom:4px;}
.sets{ flex:1; min-height:0; overflow:hidden;}
.sets section{ padding-bottom:10px;}
.sets section + section{
    border-top: 2px solid;
    border-image: linear-gradient(90deg,#3b4453 8px,#222933 8px,#222933 172px,#3b4453 172px) 1;
}
.sets h2{
    display: flex;
    align-items: center;
    height: 40px;
    padding: 6px 8px 0 8px;
    font: 20px/24px "Liberation Sans", sans-serif;
}
.sets section:first-child h2{ padding-top:4px;}
.sets h2::before{
    content: "";
    margin-right: 10px;
    border: 8px solid transparent;
    border-top: 9px solid #f2f2f2;
    border-bottom: 0;
}
.sets h2 svg{ width:20px; height:20px; margin-left:auto; margin-right:2px;}
.sets h2 .g{ fill:#f2f2f2;}
.grid{ display:grid; grid-template-columns:repeat(3,1fr); grid-auto-rows:64px;}
.grid svg{ width:32px; height:32px;}
.grid .fly{ position:relative;}
.grid .fly::after{
    content: "";
    position: absolute;
    right: 8px;
    bottom: 9px;
    border: 4px solid #9c9ea2;
    border-top-color: transparent;
    border-left-color: transparent;
}
.grid .badged::after{ right:8px; top:10px;}
.tool-foot{ display:flex; height:44px; padding-left:31px; gap:35px; background:#3b4453;}
.tool-foot svg{ width:22px; height:22px;}
.tool-foot button + button svg{ width:26px;}

/* work area */
.work{ flex:1; display:flex; flex-direction:column; min-width:0;}
.desk{ flex:1; display:flex; min-height:0;}
.center{ flex:1; display:flex; flex-direction:column; min-width:0;}
.doc-tabs{
    display: flex;
    height: 46px;
    padding-left: 2px;
    background: linear-gradient(90deg,#222933 612px,#3b4453 612px);
    border-bottom: 2px solid #222933;
    gap: 2px;
    font: 22px/44px "Liberation Sans", sans-serif;
}
.doc-tabs .square{ width:46px; background:#3b4453;}
.doc-tabs .square + .square{ width:44px;}
.doc-tabs svg{ width:28px; height:28px;}
.doc-tabs .plus{ width:22px; height:22px;}
.doc{ width:256px; padding-left:6px; background:#3b4453; color:#a9abae;}
.doc.on{ background:#4d596e; color:#fff; font-weight:bold; font-size:21px;}

.views{ flex:1; display:flex; min-height:0; background:#212830;}
.side-views{
    width: 504px;
    display: grid;
    grid-template-rows: 539fr 11px 534fr 11px 539fr 2px;
}
.view{ position:relative; overflow:hidden; background:#212830;}
.canvas{ width:100%; height:100%;}
.current{ flex:1;}
.current::after{
    content: "";
    position: absolute;
    inset: 2px 1px 3px 1px;
    pointer-events: none;
    box-shadow: inset 0 0 0 1px #173c66, inset 0 0 0 2px #212830, inset 0 0 0 3px #12508f, inset 0 0 0 4px #212830, inset 0 0 0 5px #0a7cf5, inset 0 0 0 6px #10549c, inset 0 0 0 7px #212830, inset 0 0 0 8px #173c66;
}
.split{
    position: relative;
    display: flex;
    align-items: center;
    justify-content: center;
    background: repeating-linear-gradient(#484848 0 1px,#2b2b2b 1px 3px);
}
.split i{ width:25px; height:6px; border:solid #8c8c8c; border-width:1px 0;}
.split::before, .split.upright::after{
    content: "+";
    position: absolute;
    left: 14px;
    color: #8c8c8c;
    font: 16px/11px "Liberation Sans", sans-serif;
}
.split.upright{
    flex-direction: column;
    justify-content: space-around;
    width: 10px;
    background: repeating-linear-gradient(90deg,#484848 0 1px,#2b2b2b 1px 3px);
}
.upright i{ width:5px; height:25px; border-width:0 1px;}
.split.upright::before{ left:0; top:15px;}
.split.upright::after{ left:0; bottom:14px;}

.minicube{ position:absolute; right:8px; top:32px; width:100px; height:72px; opacity:.8;}
.bigcube{ position:absolute; right:27px; top:88px; width:264px; height:220px;}
.compass{ fill:#a2a5a8; font-size:34px; font-weight:700; text-anchor:middle;}
.big-letter{ font-size:44px;}
.face{ fill:#4d5359; font:bold 17px "Liberation Sans", sans-serif; text-anchor:middle;}
.wcs{
    position: absolute;
    right: 10px;
    top: 122px;
    gap: 12px;
    width: 100px;
    height: 24px;
    border-radius: 8px;
    background: rgba(160,165,172,.3);
    color: #2a3038;
    font: 20px/24px "Liberation Sans", sans-serif;
}
.wcs svg{ width:18px; height:12px; stroke:#2a3038; stroke-width:2;}
.current .wcs{ right:112px; top:340px; background:#68757a; color:#212830;}
.current .wcs svg{ stroke:#aebfc6; stroke-width:1;}
.view-label{
    position: absolute;
    left: 28px;
    top: 9px;
    display: flex;
    color: #9d9d98;
    font-size: 23px;
    font-weight: 600;
}
.view-label button{ height:27px; padding:0 13px 0 12px; border-left:2px solid #9d9d98;}
.view-label .first{ width:40px; padding:0 20px 0 0; border:0; font-weight:400;}

/* command line */
.command{
    position: absolute;
    left: 3px;
    bottom: 2px;
    z-index: 1;
    display: grid;
    grid-template-columns: 76px 916px;
    grid-template-rows: 128px 46px;
    gap: 2px;
    font: 20px/30px "Noto Sans", sans-serif;
    color: #b6b8ba;
}
.history{
    grid-column: 2;
    position: relative;
    padding: 10px 10px 0 10px;
    background: #3b4453;
    white-space: nowrap;
}
.history::after{
    content: "";
    position: absolute;
    right: 9px;
    bottom: 2px;
    width: 8px;
    height: 40px;
    border-radius: 4px;
    background: #989a9c;
}
.history, .prompt, .entry{ box-shadow:0 0 0 2px #222933;}
.prompt, .entry{ position:relative; background:#3b4453;}
.prompt svg{ width:46px; height:20px;}
.entry{ display:flex;}
.entry input{ flex:1; padding-left:9px; font-style:italic;}
.entry input::placeholder{ color:#9a9fa6;}
.entry::after, .combo::after{
    content: "";
    position: absolute;
    right: 8px;
    top: 50%;
    margin-top: -5px;
    border: 6px solid transparent;
    border-top: 9px solid #d0d0d0;
    border-bottom: 0;
    pointer-events: none;
}

/* right palette */
.palette{ width:669px; background:#3b4453;}
.palette-tabs{ display:flex; height:46px; gap:2px; background:#222933; border-bottom:2px solid #222933;}
.palette-tabs button{ width:104px; background:#2f3440;}
.palette-tabs button.on{ background:#3b4453; margin-bottom:-2px; width:105px;}
.palette-tabs::before{ content:""; order:1; flex:1; background:#2f3440;}
.palette-tabs .more{ order:2; width:47px; background:#3b4453;}
.palette-tabs svg{ width:32px; height:32px;}

.layers{ padding:0 19px 0 22px;}
.title-row{ display:flex;}
.title-row h2{ font-size:24px; line-height:32px;}
.layers .title-row{ height:66px;}
.layers h2{ width:104px; padding-top:2px;}
.layer-tools{ display:flex; gap:16px; height:32px; margin-top:10px;}
.layer-tools svg{ width:32px; height:32px;}
.dock{ margin-left:auto; height:32px; padding-right:1px;}
.dock svg{ width:24px; height:28px;}

.combo, .box{
    height: 38px;
    border: 2px solid #303c40;
    border-radius: 5px;
    background: #4f5a6d;
}
.combo{ position:relative; display:flex;}
.combo select{ flex:1; padding:0 0 2px 12px;}
.combo .lead{ display:flex; align-items:center;}
.box{ width:100%; padding-left:7px;}
.off, .box:disabled{ border-color:#384250; background:#444d5e; color:#868d99;}
.off select{ opacity:1; color:#868d99;}
.off::after{ border-top-color:#777e8a;}
.big{ height:50px; margin:0 0 5px 2px; width:626px;}
.swatch{ width:18px; height:18px; border:2px solid #000; background:#fff;}
.marks .lead{ padding-left:7px;}
.marks .lead svg{ width:120px; height:36px; margin-right:-8px;}
.marks select{ padding-left:24px;}
.dot{ width:16px; height:16px; margin:0 auto; border-radius:50%; background:#dcdcdc;}
.rule{ width:64px; height:2px; margin:0 auto; background:#fff;}
.fold{ height:46px; margin-bottom:6px; padding-left:7px; color:#c6c8cb; font-weight:400;}
.fold::before{
    content: "";
    margin-right: 22px;
    border: 9px solid transparent;
    border-top: 15px solid #92918c;
    border-bottom: 0;
}
.layer-list{ height:347px; border:2px solid #282e39; background:#4f5a6d; margin:0 1px 0 -1px;}
table{ width:100%; border-collapse:collapse; table-layout:fixed;}
.c-eye{ width:51px;}
.c-flag{ width:44px;}
.c-line{ width:94px;}
.c-last{ width:42px;}
th{ height:46px; background:#2f3440; border-left:2px solid #282e39; border-bottom:2px solid #282e39;}
th:first-child{ border-left:0;}
.ic{ width:24px; height:24px; margin:0 auto;}
th.name{ position:relative; background:#4d596e; text-align:left; font-weight:600;}
.name div{ display:flex; padding:0 6px 0 4px;}
.name .ic{ margin:0;}
.name span{ flex:1; line-height:24px; padding-left:9px;}
.name::after{
    content: "";
    position: absolute;
    left: 50%;
    bottom: 0;
    margin-left: -6px;
    border: 6px solid transparent;
    border-bottom: 9px solid #4a94ea;
    border-top: 0;
}
td{ height:38px; padding-bottom:1px;}
td:nth-child(5){ padding-left:16px;}
td .swatch{ float:left; margin:6px 18px 0 0;}
.picked{ background:#8f9bac;}
.list-tools{ display:flex; align-items:center; gap:32px; height:52px; padding:0 12px 0 14px;}
.list-tools svg{ width:28px; height:28px;}
.list-tools .push{ margin-right:6px;}
.list-tools .cols svg{ width:38px;}
.search{
    display: flex;
    align-items: center;
    height: 40px;
    margin: 0 3px 0 1px;
    border-radius: 7px;
    background: #fff;
    font-size: 25px;
    font-weight: 400;
}
.search svg{ width:34px; height:30px; margin:0 9px 0 11px;}
.search input{ flex:1; color:#333;}
.search input::placeholder{ color:#b9b9b9;}

.props{ margin-top:18px; border-top:2px solid #222933;}
.props .title-row{ height:51px; padding:0 19px 0 22px;}
.props h2{ flex:1;}
.switch{
    display: flex;
    height: 28px;
    border: 2px solid #2b323d;
    border-top: 0;
    font-size: 17px;
    color: #8e95a1;
}
.switch button{ width:57px;}
.switch .on{ width:60px; background:#4d596e; border-left:2px solid #2b323d; color:#fff;}
.note{ margin-left:20px; height:28px;}
.note svg{ width:28px; height:28px;}
.props .dock{ margin-left:22px; height:28px; padding-right:0;}
.space{ height:42px; margin:0 23px 14px 22px;}
.fields{
    display: grid;
    grid-template-columns: 309px minmax(0,1fr);
    grid-auto-rows: 38px;
    row-gap: 8px;
    column-gap: 18px;
    padding-right: 27px;
}
.fields label{ text-align:right; line-height:35px; color:#d3d5d7;}
.color .lead{ padding:0 7px 0 18px;}
.ltype .lead{ padding:0 16px 0 14px;}
.pair{ display:flex; gap:6px; align-items:center; padding-left:6px;}
.tight{ padding:0;}
.slide{
    flex: 1;
    min-width: 0;
    display: flex;
    height: 34px;
    border: 2px solid #303c40;
    border-left-color: #5b94ee;
    background: linear-gradient(#8e97a5,#8e97a5) 50% 80%/1px 12px no-repeat #4f5a6d;
}
.slide input{ flex:1; text-align:right; padding-right:4px;}
.from{ flex:0 0 78px; height:38px; border:2px solid #303c40; border-radius:5px; background:#4b566a;}
.from svg{ width:54px; height:30px;}
.pick{ flex:0 0 40px; height:38px; border:2px solid #303c40; border-radius:5px;}
.pick svg{ width:36px; height:34px;}
.tight .box{ flex:1;}

/* status bar */
.status{
    display: flex;
    align-items: stretch;
    height: 48px;
    padding: 0 2px;
    border: solid #222933;
    border-width: 2px 0;
    background: #3b4453;
    font-size: 21px;
    line-height: 44px;
    color: #a9afb8;
}
.status a, .add{ border-right:2px solid #222933; text-align:center;}
.status a.on{ width:120px; padding-right:6px; background:#4d596e; color:#fff; font-weight:600;}
.status .add{ width:46px;}
.status .layout{ width:118px; padding-right:2px; font-weight:400;}
.add svg{ width:22px; height:22px;}
.coords{ border-left:2px solid #222933; padding:0 8px 0 22px; font-size:24px; color:#b9bbbd;}
.modes{ display:flex; align-items:center; gap:4px;}
.modes button{ width:40px; height:40px;}
.modes .on{ background:#668fc2;}
.modes svg{ width:32px; height:32px;}
.scale{ gap:10px; padding:0 18px 0 1px; color:#a3a6aa; font-weight:400; font-size:22px;}
.scale::after{ content:""; border:6px solid transparent; border-top:9px solid #dcdcdc; border-bottom:0;}
.shapes svg{ width:32px; height:32px;}
.cog{ padding:0 13px;}
.cog svg{ width:30px; height:30px;}
```

FILE: views.js
```js
var RED = "#9c0000", GRAY = "#a0a0a0";

function line(x1, y1, x2, y2, color, width, extra) {
    return '<path d="M' + x1 + ' ' + y1 + 'L' + x2 + ' ' + y2 + '" stroke="' + color + '" stroke-width="' + (width || 1) + '" ' + (extra || '') + '/>';
}

function poly(pts, fill) {
    return '<path d="M' + pts.map(function (p) { return p.join(' '); }).join('L') + 'z" fill="' + fill + '"/>';
}

// o: origin of the drawing, x and y: one board square along each axis
function View(id, o, x, y) {
    this.el = document.getElementById(id);
    this.o = o;
    this.x = x;
    this.y = y;
}
View.prototype = {

    at : function (i, j, up) {
        return [
            this.o[0] + i * this.x[0] + j * this.y[0],
            this.o[1] + i * this.x[1] + j * this.y[1] - (up || 0)
        ];
    },

    seg : function (i1, j1, i2, j2, up, color, width, extra) {
        var a = this.at(i1, j1, up), b = this.at(i2, j2, up);
        return line(a[0], a[1], b[0], b[1], color, width, extra);
    },

    // a grid step is 1.25 squares, every fifth line is a major one
    grid : function (minor, major) {
        var s = '', n, d, c;
        for (n = -60; n <= 60; n++) {
            d = n * 1.25;
            c = n % 5 ? minor : major;
            s += this.seg(d, -80, d, 80, 0, c) + this.seg(-80, d, 80, d, 0, c);
        }
        return s;
    },

    // shaded board of the small viewports
    shaded : function () {
        var s = this.grid('#262e38', '#343c4c'), i, j, red;
        s += this.seg(8, 0, 30, 0, 0, '#7a2530');
        for (j = 7; j >= 0; j--) {
            for (i = 0; i < 8; i++) {
                red = (i + j) % 2 === 0;
                s += poly([this.at(i, j, 4), this.at(i + 1, j, 4), this.at(i + 1, j + 1, 4), this.at(i, j + 1, 4)], red ? RED : GRAY);
                if (j) {
                    s += this.seg(i, j, i + 1, j, 4, red ? '#c03030' : '#c9cbc6', 2);
                } else {
                    s += poly([this.at(i, 0, 4), this.at(i + 1, 0, 4), this.at(i + 1, 0, 0), this.at(i, 0, 0)], red ? '#c43c3c' : '#c6c8c3');
                }
            }
        }
        s += this.seg(0, 0, 0, 8, 0, '#2c6b2c');
        this.el.innerHTML = s;
    },

    // transparent board of the current viewport
    xray : function () {
        var s = this.grid('#262e38', '#323a49'), i, j, k, h = 6, red;
        s += this.seg(0, 0, 0, 40, 0, '#2f7a35') + this.seg(0, 0, 40, 0, 0, '#702a33');

        for (i = 0; i < 8; i++) {
            for (j = 0; j < 8; j++) {
                red = (i + j) % 2 === 0;
                s += poly([this.at(i, j, h), this.at(i + 1, j, h), this.at(i + 1, j + 1, h), this.at(i, j + 1, h)], red ? '#840b0d' : '#848888');
                // side walls seen through the top
                if (i) s += poly([this.at(i, j, h), this.at(i, j + 1, h), this.at(i, j + 1, 0), this.at(i, j, 0)], '#957778');
                if (j < 7) s += poly([this.at(i, j + 1, h), this.at(i + 1, j + 1, h), this.at(i + 1, j + 1, 0), this.at(i, j + 1, 0)], '#957778');
            }
        }
        for (k = 0; k < 8; k++) {
            s += poly([this.at(k, 0, h), this.at(k + 1, 0, h), this.at(k + 1, 0, 0), this.at(k, 0, 0)], k % 2 ? '#6c7274' : '#6d0a0d');
            s += poly([this.at(8, k, h), this.at(8, k + 1, h), this.at(8, k + 1, 0), this.at(8, k, 0)], k % 2 ? '#6d0a0d' : '#6c7274');
        }

        s += '<clipPath id="board">' + poly([this.at(0, 0, h), this.at(8, 0, h), this.at(8, 8, h), this.at(0, 8, h)], '#000') + '</clipPath>';
        s += '<g clip-path="url(#board)" opacity=".35">' + this.grid('#5a4a50', '#303848') + '</g>';

        for (k = 0; k <= 8; k++) {
            s += this.seg(k, 0, k, 8, h, '#fff', 1.5) + this.seg(0, k, 8, k, h, '#fff', 1.5);
            s += this.seg(k, 0, k, 8, 0, '#e0d0d0', 1, k === 8 ? '' : 'opacity=".55" stroke-dasharray="3 2"');
            s += this.seg(0, k, 8, k, 0, '#e0d0d0', 1, k === 0 ? '' : 'opacity=".55" stroke-dasharray="3 2"');
        }
        for (i = 0; i <= 8; i++) {
            for (j = 0; j <= 8; j++) {
                var a = this.at(i, j, h);
                s += line(a[0], a[1], a[0], a[1] + h, '#fff');
            }
        }
        s += this.seg(0, 0, 0, 8, 0, '#3f8f3f');
        s += this.ucs() + this.cursor(1049, 1153);
        this.el.innerHTML = s;
    },

    ucs : function () {
        var x = this.o[0], y = this.o[1];
        return line(x + 6, y + 2, x + 66, y + 38, '#b85a5a', 12, 'stroke-linecap="round"') +
            line(x + 8, y + 1, x + 67, y + 35, '#e88484', 5, 'stroke-linecap="round"') +
            line(x + 8, y - 5, x + 65, y - 38, '#2f7a2e', 12, 'stroke-linecap="round"') +
            line(x + 8, y - 7, x + 65, y - 40, '#4a9c46', 5, 'stroke-linecap="round"') +
            line(x, y, x, y - 78, '#34578f', 12, 'stroke-linecap="round"') +
            line(x + 1, y, x + 1, y - 76, '#4a75b8', 5) +
            '<circle cx="' + x + '" cy="' + (y - 79) + '" r="4" fill="#8fc4fa"/>' +
            '<g font-family="Inter, sans-serif" font-weight="200" text-anchor="middle">' +
            '<text x="' + (x + 9) + '" y="' + (y - 87) + '" font-size="34" fill="#1268f0">Z</text>' +
            '<text x="' + (x + 75) + '" y="' + (y - 48) + '" font-size="33" fill="#1fae1f">Y</text>' +
            '<text x="' + (x + 75) + '" y="' + (y + 32) + '" font-size="33" fill="#f03030">X</text></g>';
    },

    cursor : function (x, y) {
        return line(x, y - 88, x, y - 6, '#8a84ec') + line(x, y + 6, x, y + 43, '#8a84ec') +
            line(x - 38, y - 22, x - 6, y - 4, '#f08080') + line(x + 6, y + 4, x + 76, y + 43, '#f08080') +
            line(x - 38, y + 21, x - 6, y + 4, '#80f080') + line(x + 6, y - 4, x + 76, y - 44, '#80f080') +
            '<rect x="' + (x - 6) + '" y="' + (y - 6) + '" width="12" height="12" stroke="#fff" stroke-width="1.5"/>';
    }

};

new View("view1", [169, 243], [46.3, -9.8], [-22.4, -20]).shaded();
new View("view2", [76, 489], [45.8, -9.7], [-22.1, -19.7]).shaded();
new View("view3", [77, 494], [46.2, -9.7], [-22.4, -19.9]).shaded();
new View("view4", [348, 855], [57.25, 33.05], [57.25, -33.05]).xray();
```
